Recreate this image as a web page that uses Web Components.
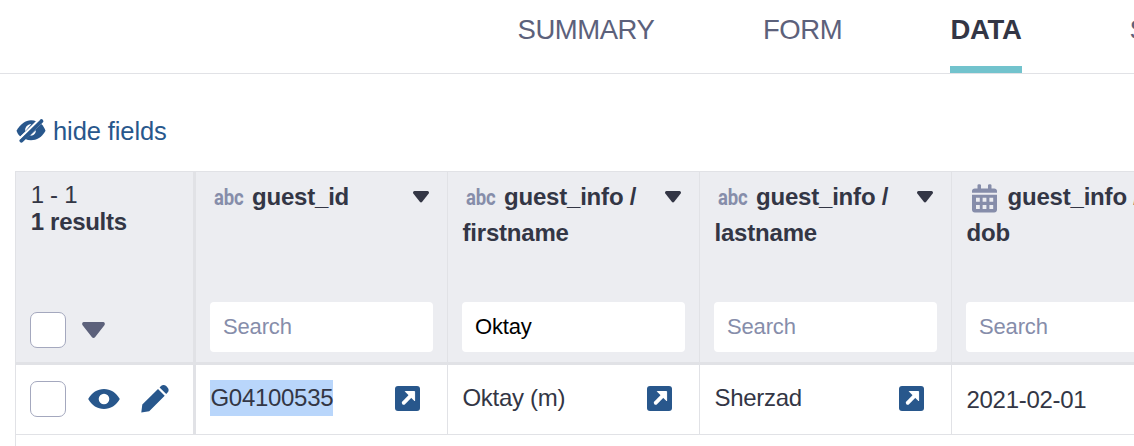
<!DOCTYPE html>
<html lang="en">
<head>
<meta charset="utf-8">
<title>Data</title>
<style>
html,body{margin:0;height:100%;overflow:hidden;background:#fff}
body{font-family:"Liberation Sans",Arial,sans-serif;font-size:24px;color:#333645}
</style>
</head>
<body>
<data-page></data-page>
<script>
const define = (name, html, setup) => {
  const t = document.createElement('template');
  t.innerHTML = html;
  customElements.define(name, class extends HTMLElement {
    constructor() {
      super();
      this.attachShadow({mode: 'open'}).append(t.content.cloneNode(true));
    }
    connectedCallback() { if (setup) setup(this, this.shadowRoot); }
  });
};

const icons = {
  hidden: [30, 26, '<path fill="#28578c" d="M.5 12.700C4.500 6 9.500 2.300 15 2.300c2 0 3.800.4 5.500 1.100L4.200 18.500C2.600 17 1.200 14.900.5 12.700z"/><path fill="#28578c" d="M25.300 6c1.700 1.600 3.300 3.900 4.200 6.700C26 19.300 20.500 22.200 15 22.200c-2.100 0-4-.4-5.700-1.200z"/><path fill="#fff" d="M14.200 17.600l5.600-5.300c.4 3-2.400 5.700-5.600 5.300z"/><path fill="#fff" d="M9.300 13.300c-.8-3.800 2-7 6-7.300z"/><path stroke="#28578c" stroke-width="4" stroke-linecap="round" d="M5.400 22.600L25.400 3.100"/><path stroke="#fff" stroke-width="1.800" d="M3.300 20.800L23.500 1"/>'],
  eye: [32, 20, '<path fill="#28578c" fill-rule="evenodd" d="M.2 10C3.800 3.500 9.500 0 16 0s12.200 3.500 15.800 10C28.200 16.500 22.500 20 16 20S3.800 16.500.2 10zM16 4.700a5.300 5.300 0 1 0 0 10.600 5.300 5.300 0 0 0 0-10.600z"/>'],
  pencil: [28, 28, '<path fill="#28578c" d="M.3 27.500l1-7.900L17 4l6.700 6.700L8.200 26.300zM18.600 2.500L20 1.100c1.500-1.500 3.800-1.300 5.200 0l1.300 1.300c1.500 1.500 1.500 3.700.1 5.200l-1.400 1.500z"/>'],
  link: [25, 25, '<rect width="25" height="25" rx="3" fill="#28578c"/><path d="M8.700 16.800l6.600-6.600" stroke="#fff" stroke-width="3.800" stroke-linecap="round"/><path fill="#fff" stroke="#fff" stroke-width="1" stroke-linejoin="round" d="M10.300 5.500h9.300v9.300z"/>'],
  caret: [16, 12, '<path fill="#333645" d="M1.500 0h13c1.300 0 1.900 1.500 1.200 2.500L9.200 10.800c-.7.800-1.700.8-2.400 0L.3 2.500C-.4 1.500.2 0 1.500 0z"/>'],
  filter: [23, 16, '<path fill="#5c617b" d="M1.900 0h19.200c1.700 0 2.300 2 1.300 3.200l-9.200 11.800c-1 1.200-2.400 1.200-3.400 0L.6 3.200C-.4 2 .2 0 1.900 0z"/>'],
  text: [30, 20, '<text x="0" y="17.500" font-family="Roboto, sans-serif" font-weight="700" font-size="22" fill="#868daa" textLength="29.500" lengthAdjust="spacingAndGlyphs">abc</text>'],
  calendar: [25, 29, '<path fill="#868daa" fill-rule="evenodd" d="M0 10.700h25v15c0 1.500-1.200 2.800-2.800 2.800H2.800C1.200 28.500 0 27.200 0 25.700zM4 13.700v4h3.800v-4zm6.600 0v4h3.800v-4zm6.800 0v4h3.800v-4zM4 20.900v4h3.800v-4zm6.600 0v4h3.800v-4zm6.800 0v4h3.800v-4zM0 8.700V7c0-1.500 1.200-2.600 2.800-2.600h2.700V1.200c0-1.300 3.500-1.300 3.500 0v3.200h7V1.200c0-1.300 3.500-1.300 3.500 0v3.200h2.700C23.800 4.400 25 5.500 25 7v1.700z"/>']
};

define('ui-icon', '<style>:host{display:block;flex:none}svg{display:block}</style><span></span>', (el, root) => {
  const [w, h, body] = icons[el.getAttribute('name')];
  root.querySelector('span').innerHTML = `<svg width="${w}" height="${h}" viewBox="0 0 ${w} ${h}" fill="none" style="overflow:visible">${body}</svg>`;
});

define('nav-tab', `<style>
:host{display:block;flex:none;box-sizing:border-box;height:73px;padding-top:10px;line-height:39px;font-size:27.500px;letter-spacing:-.45px;color:#5c617b;white-space:nowrap}
:host([active]){color:#333645;font-weight:700;border-bottom:7px solid #72c3cd;letter-spacing:-.35px;text-indent:.5px}
</style><slot></slot>`);

define('nav-bar', `<style>
:host{display:flex;height:73px;border-bottom:1px solid #e1e2e6;padding-left:517.500px;overflow:hidden}
nav-tab:nth-of-type(1){width:245.500px}
nav-tab:nth-of-type(2){width:187px}
nav-tab:nth-of-type(3){width:72px;margin-right:107.500px}
</style><nav-tab>SUMMARY</nav-tab><nav-tab>FORM</nav-tab><nav-tab active>DATA</nav-tab><nav-tab>S</nav-tab>`);

define('hide-fields', `<style>
:host{display:flex;align-items:center;gap:7px;height:36px;padding:39px 0 0 16px;color:#28578c;line-height:36px;font-size:25.500px;letter-spacing:-.1px}
</style><ui-icon name="hidden"></ui-icon><span>hide fields</span>`);

define('check-box', `<style>
:host{display:block;flex:none;box-sizing:border-box;width:36px;height:36px;border:1px solid #a4a8be;border-radius:7px;background:#fff}
</style>`);

define('column-head', `<style>
:host{display:flex;flex-direction:column;justify-content:space-between;box-sizing:border-box;height:190px;padding:7px 14px 10px;border-right:1px solid #e1e2e6}
.title{display:grid;grid-template-columns:1fr 16px;line-height:36px;font-weight:700;letter-spacing:-.2px;margin-right:4px}
.first{display:flex;align-items:center;white-space:nowrap;gap:8px;padding-left:4px;height:36px}
.cal{padding-left:6px;gap:10.500px}
.cal ui-icon{margin-top:3px}
.caret{padding:12px 0 0}
.second{grid-column:1/3;padding-left:.5px}
.search{height:50px;line-height:50px;border-radius:4px;background:#fff;padding-left:13px;font-size:22px;letter-spacing:-.15px;color:#868daa}
.filled{color:#000}
</style><div class="title"><div class="first"><ui-icon></ui-icon><span class="a"></span></div><ui-icon class="caret" name="caret"></ui-icon><div class="second"></div></div><div class="search"></div>`, (el, root) => {
  const type = el.getAttribute('type');
  const ic = document.createElement('ui-icon');
  ic.setAttribute('name', type);
  root.querySelector('.first ui-icon').replaceWith(ic);
  if (type === 'calendar') root.querySelector('.first').classList.add('cal');
  root.querySelector('.a').textContent = el.getAttribute('label');
  root.querySelector('.second').textContent = el.getAttribute('sub') || '';
  const s = root.querySelector('.search');
  s.textContent = el.getAttribute('value') || 'Search';
  if (el.hasAttribute('value')) s.classList.add('filled');
});

// An icon without a name draws nothing.
icons.null = [0, 0, ''];

define('data-cell', `<style>
:host{display:flex;align-items:flex-start;justify-content:space-between;box-sizing:border-box;height:69px;padding:15px 27px 0 14px;border-right:1px solid #e1e2e6;line-height:36px;letter-spacing:-.3px}
:host([date]){padding-top:17px}
:host([date]) ui-icon{display:none}
ui-icon{margin-top:6px}
span{padding-left:.5px}
:host([selected]) span{background:#b9d6fb;width:122.500px}
</style><span><slot></slot></span><ui-icon name="link"></ui-icon>`);

define('result-count', `<style>
:host{display:block;line-height:27px;font-size:24px;white-space:nowrap;padding-left:.7px}
div{letter-spacing:-.3px} b{display:block;letter-spacing:-.3px}
</style><div>1 - 1</div><b>1 results</b>`);

define('data-table', `<style>
:host{display:grid;grid-template-columns:180px repeat(4,252px);grid-template-rows:193px 70px 40px;width:1188px;margin:22px 0 0 15px;border:1px solid #e1e2e6;border-bottom:0}
:host>*{box-sizing:border-box}
column-head,.corner{background:#ecedf1;height:193px;border-bottom:3px solid #e1e2e6}
.corner,.tools{border-right:3px solid #e1e2e6}
.corner{display:flex;flex-direction:column;justify-content:space-between;padding:9px 0 14px 14px}
.pick{display:flex;align-items:center;gap:16px}
.tools{display:flex;align-items:center;padding:0 0 2px 14px}
.tools ui-icon:nth-of-type(1){margin-left:22px}
.tools ui-icon:nth-of-type(2){margin-left:21px}
.tools,data-cell{height:70px;border-bottom:1px solid #e1e2e6}
</style>
<div class="corner"><result-count></result-count><div class="pick"><check-box></check-box><ui-icon name="filter"></ui-icon></div></div>
<column-head type="text" label="guest_id"></column-head>
<column-head type="text" label="guest_info /" sub="firstname" value="Oktay"></column-head>
<column-head type="text" label="guest_info /" sub="lastname"></column-head>
<column-head type="calendar" label="guest_info /" sub="dob"></column-head>
<div class="tools"><check-box></check-box><ui-icon name="eye"></ui-icon><ui-icon name="pencil"></ui-icon></div>
<data-cell selected>G04100535</data-cell>
<data-cell>Oktay (m)</data-cell>
<data-cell>Sherzad</data-cell>
<data-cell date>2021-02-01</data-cell>`);

define('data-page', `<style>:host{display:block;width:1134px;height:446px;overflow:hidden}</style>
<nav-bar></nav-bar><hide-fields></hide-fields><data-table></data-table>`);
</script>
</body>
</html>
